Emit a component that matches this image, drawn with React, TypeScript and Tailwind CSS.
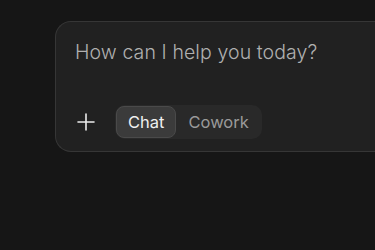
export default function App() {
  return (
    <div className="min-h-screen w-full bg-[#161616] pt-[21px] pl-[55px] overflow-hidden font-['Inter',sans-serif]">
      <div className="w-[340px] h-[131px] rounded-l-[16px] border border-r-0 border-[#363636] bg-[#212121] pt-[15px] pl-[19px] flex flex-col">
        <p className="text-[19.5px] leading-[30px] font-light text-[#b0b0b0] tracking-[0.1px]">How can I help you today?</p>
        <div className="mt-auto mb-[12px] flex items-center">
          <svg width="18" height="18" viewBox="0 0 18 18" className="ml-[2px] text-[#ececec]">
            <path d="M9 1v16M1 9h16" stroke="currentColor" strokeWidth="1.6" strokeLinecap="round" fill="none" />
          </svg>
          <div className="ml-[20px] flex items-center rounded-[10px] bg-[#292929] p-[1px]">
            <div className="h-[32px] px-[11px] flex items-center rounded-[8px] border border-[#4a4a4a] bg-[#3b3b3b] text-[16.5px] text-[#f0f0f0]">Chat</div>
            <div className="h-[32px] pl-[12px] pr-[12px] flex items-center text-[16.5px] text-[#9a9a9a]">Cowork</div>
          </div>
        </div>
      </div>
    </div>
  );
}
